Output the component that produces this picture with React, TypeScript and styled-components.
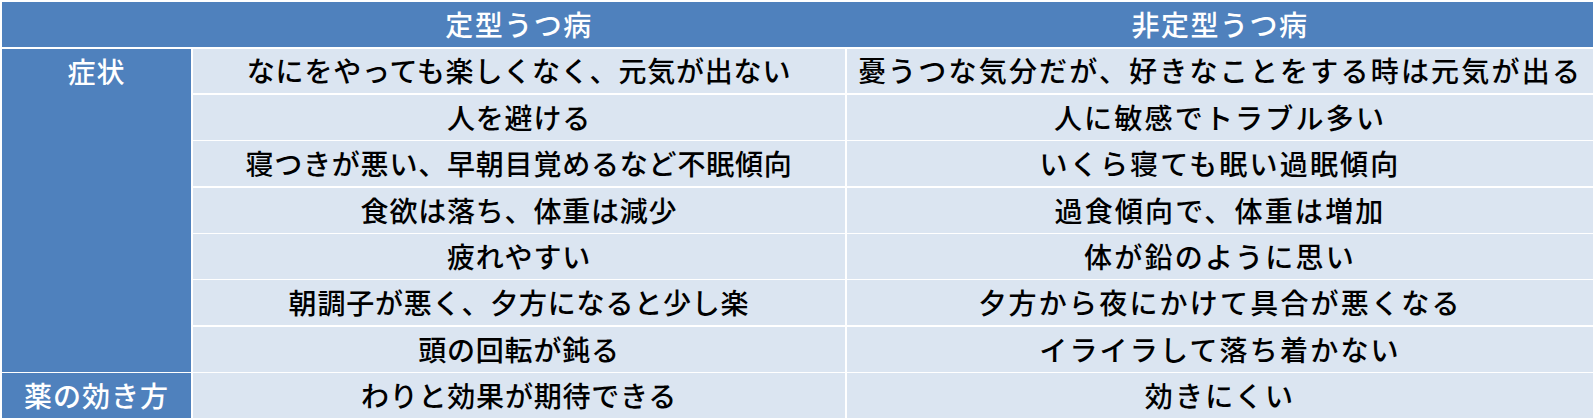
import styled, { createGlobalStyle } from 'styled-components';

const GlobalStyle = createGlobalStyle`
    body {
        margin: 0;
        background: #fff;
        font-family: "Noto Sans CJK JP", "Noto Sans", sans-serif;
    }
`;

const rows = [
    ["なにをやっても楽しくなく、元気が出ない", "憂うつな気分だが、好きなことをする時は元気が出る"],
    ["人を避ける", "人に敏感でトラブル多い"],
    ["寝つきが悪い、早朝目覚めるなど不眠傾向", "いくら寝ても眠い過眠傾向"],
    ["食欲は落ち、体重は減少", "過食傾向で、体重は増加"],
    ["疲れやすい", "体が鉛のように思い"],
    ["朝調子が悪く、夕方になると少し楽", "夕方から夜にかけて具合が悪くなる"],
    ["頭の回転が鈍る", "イライラして落ち着かない"],
];

const effect = ["わりと効果が期待できる", "効きにくい"];

export default function App() {
    return (
        <>
            <GlobalStyle />
            <Table>
                <HeaderRow>
                    <HeaderCell />
                    <HeaderCell>定型うつ病</HeaderCell>
                    <HeaderCell>非定型うつ病</HeaderCell>
                </HeaderRow>

                <Label span={rows.length}>症状</Label>
                {rows.map((row, idx) => (
                    <Row key={idx}>
                        <Cell>{row[0]}</Cell>
                        <Cell wide>{row[1]}</Cell>
                    </Row>
                ))}

                <Label span={1}>薬の効き方</Label>
                <Row>
                    <Cell>{effect[0]}</Cell>
                    <Cell wide>{effect[1]}</Cell>
                </Row>
            </Table>
        </>
    );
}

const Table = styled.div`
    display: grid;
    grid-template-columns: 189px 652px 1fr;
    grid-template-rows: 45px repeat(8, 1fr);
    column-gap: 2px;
    row-gap: 1.5px;
    width: 1591px;
    height: 416px;
    margin: 2px;
    font-size: 28px;
    font-weight: 500;
`;

const HeaderRow = styled.div`
    grid-column: 1 / -1;
    display: grid;
    grid-template-columns: subgrid;
    background: #4f81bd;
`;

const HeaderCell = styled.div`
    display: flex;
    align-items: center;
    justify-content: center;
    color: #fff;
    line-height: 1;
    letter-spacing: 1.5px;
    padding-bottom: 2px;
`;

const Label = styled.div<{ span: number }>`
    grid-column: 1;
    grid-row: span ${(p) => p.span};
    display: flex;
    justify-content: center;
    align-items: flex-start;
    height: 100%;
    background: #4f81bd;
    color: #fff;
    line-height: 44px;
    letter-spacing: 1px;
`;

const Row = styled.div`
    grid-column: 2 / 4;
    display: grid;
    grid-template-columns: subgrid;
`;

const Cell = styled.div<{ wide?: boolean }>`
    display: flex;
    align-items: center;
    justify-content: center;
    background: #dbe5f1;
    color: #000;
    white-space: nowrap;
    line-height: 1;
    letter-spacing: ${(p) => (p.wide ? '2.2px' : '0.8px')};
    padding-bottom: 1px;
`;
